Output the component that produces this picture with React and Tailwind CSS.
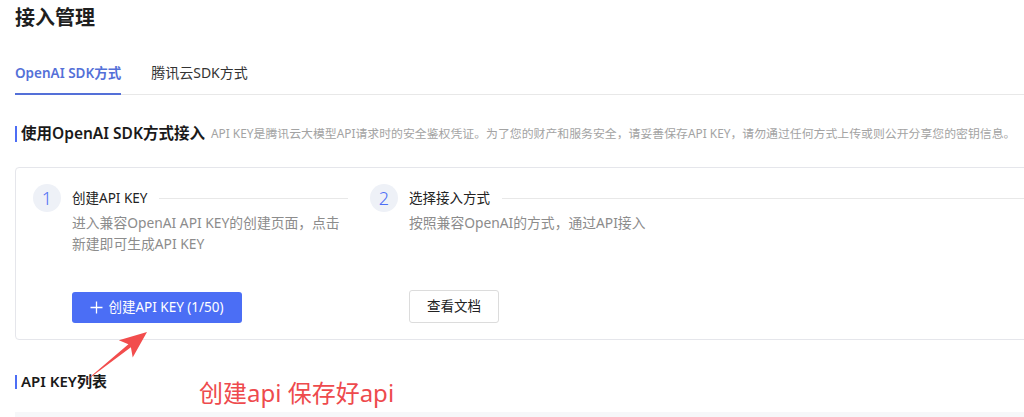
import React from 'react';

const font = { fontFamily: '"Noto Sans", "Noto Sans CJK SC", sans-serif' };

const Step = ({ num, title, desc, className, lineClass, children }) => (
  <div className={`flex ${className}`}>
    <div className="w-[28px] h-[28px] shrink-0 rounded-full bg-[#eef1f7] flex items-center justify-center text-[18px] font-light text-[#4d6ef5] leading-none">
      {num}
    </div>
    <div className="ml-[11px] flex-1 flex flex-col">
      <div className="h-[28px] flex items-center">
        <span className="text-[13.5px] text-[#222]">{title}</span>
        <div className={`flex-1 h-px bg-[#e8e8e8] ml-[12px] ${lineClass}`}></div>
      </div>
      <div className="h-[42px] text-[13.8px] leading-[21px] text-[#8c8c8c] whitespace-nowrap">{desc}</div>
      {children}
    </div>
  </div>
);

const App = () => {
  return (
    <div className="relative w-[1024px] h-[417px] overflow-hidden bg-white" style={font}>
      <div className="w-[1060px] pl-[15px] pt-[6px]">
        <h1 className="h-[24px] text-[20px] leading-[24px] font-bold text-[#1f1f1f]">接入管理</h1>

        {/* tabs */}
        <div className="flex gap-[30px] border-b border-[#e8e8e8]">
          <div className="pt-[32px] pb-[9px] -mb-px border-b-2 border-[#5470d8] text-[13.5px] leading-[22px] font-semibold text-[#5470d8]">
            OpenAI SDK方式
          </div>
          <div className="pt-[32px] pb-[9px] -mb-px border-b-2 border-transparent text-[14px] leading-[22px] text-[#333]">
            腾讯云SDK方式
          </div>
        </div>

        {/* section heading */}
        <div className="mt-[31px] h-[16px] flex items-center">
          <div className="w-[2px] h-[16px] bg-[#4d6ef5]"></div>
          <span className="ml-[4px] text-[15.5px] font-semibold text-[#1a1a1a] whitespace-nowrap">使用OpenAI SDK方式接入</span>
          <span className="ml-[6px] text-[11.88px] text-[#a3a3a3] whitespace-nowrap">
            API KEY是腾讯云大模型API请求时的安全鉴权凭证。为了您的财产和服务安全，请妥善保存API KEY，请勿通过任何方式上传或则公开分享您的密钥信息。
          </span>
        </div>

        {/* steps card */}
        <div className="mt-[25px] border border-[#e5e6eb] rounded-[4px] pl-[17px] pt-[16px] pb-[16px] flex">
          <Step
            num="1"
            title="创建API KEY"
            className="w-[337px]"
            lineClass="mr-[22px]"
            desc={<>进入兼容OpenAI API KEY的创建页面，点击<br />新建即可生成API KEY</>}
          >
            <button className="mt-[38px] w-[170px] h-[31px] rounded-[3px] bg-[#4b6ef5] text-white text-[13.5px] flex items-center justify-center gap-[5px]">
              <svg width="13" height="13" viewBox="0 0 13 13" fill="none" stroke="currentColor" strokeWidth="1.3">
                <path d="M6.5 0.5v12M0.5 6.5h12" />
              </svg>
              <span>创建API KEY (1/50)</span>
            </button>
          </Step>
          <Step
            num="2"
            title="选择接入方式"
            className="flex-1"
            lineClass=""
            desc="按照兼容OpenAI的方式，通过API接入"
          >
            <button className="mt-[36px] w-[90px] h-[33px] rounded-[3px] bg-white border border-[#dcdcdc] text-[13.5px] text-[#222]">
              查看文档
            </button>
          </Step>
        </div>

        {/* list heading */}
        <div className="mt-[35px] h-[13px] flex items-center">
          <div className="w-[2px] h-[14px] bg-[#4d6ef5]"></div>
          <span className="ml-[4px] text-[15px] font-semibold text-[#1a1a1a]">API KEY列表</span>
        </div>

        <div className="mt-[24px] h-[40px] bg-[#f6f7f9]"></div>
      </div>

      {/* annotation */}
      <svg className="absolute left-[78px] top-[326px] pointer-events-none" width="76" height="62" viewBox="0 0 76 62">
        <polygon points="5,57 52.9,21.3 54.7,31.6 69,6 40.9,14.2 50.4,18.2" fill="#f24d4d" />
      </svg>
      <div className="absolute left-[199px] top-[378px] text-[24px] leading-[30px] text-[#ee4a4d] whitespace-nowrap">
        创建api 保存好api
      </div>
    </div>
  );
};

export default App;
